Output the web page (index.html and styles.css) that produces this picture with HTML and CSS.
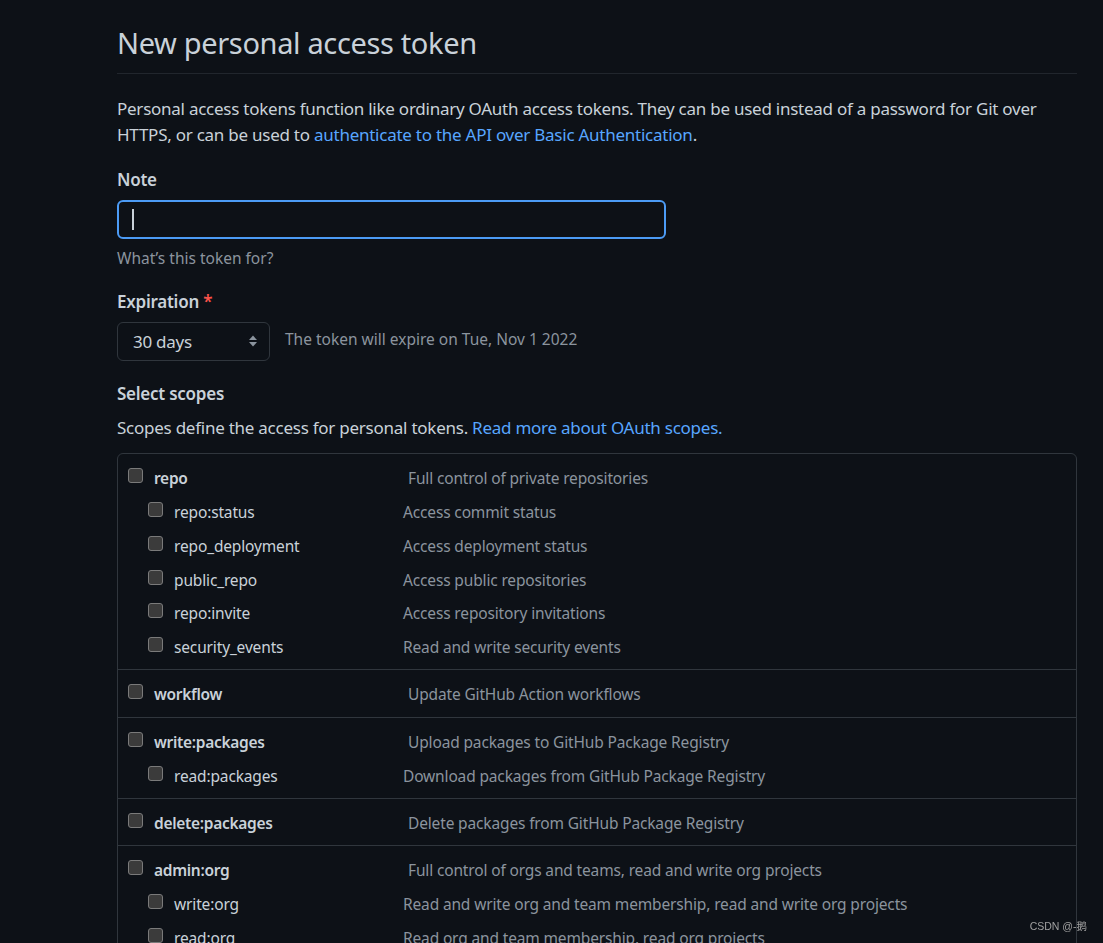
FILE: index.html
```html
<!DOCTYPE html>
<html lang="en">
<head>
<meta charset="utf-8">
<title>New personal access token</title>
<link rel="stylesheet" href="styles.css">
</head>
<body>
<main class="container">
  <div class="subhead">
    <h1 class="subhead-title">New personal access token</h1>
  </div>
  <p class="intro">Personal access tokens function like ordinary OAuth access tokens. They can be used instead of a password for Git over HTTPS, or can be used to <a href="#">authenticate to the API over Basic Authentication</a>.</p>

  <div class="field">
    <div class="label">Note</div>
    <div class="input"><span class="caret"></span></div>
    <div class="hint">What’s this token for?</div>
  </div>

  <div class="field">
    <div class="label">Expiration <span class="req">*</span></div>
    <div class="expire-row">
      <div class="select">
        <span>30 days</span>
        <svg class="select-arrows" width="10" height="14" viewBox="0 0 10 14"><path d="M5 1.5 L9 6 H1 Z" fill="#8b949e"/><path d="M1 8 H9 L5 12.5 Z" fill="#8b949e"/></svg>
      </div>
      <span class="expire-note">The token will expire on Tue, Nov 1 2022</span>
    </div>
  </div>

  <div class="label scopes-label">Select scopes</div>
  <p class="scopes-desc">Scopes define the access for personal tokens. <a href="#">Read more about OAuth scopes.</a></p>

  <div class="scopes">
    <div class="group">
      <div class="row top"><span class="cb"></span><span class="name">repo</span><span class="desc">Full control of private repositories</span></div>
      <div class="row child"><span class="cb"></span><span class="name">repo:status</span><span class="desc">Access commit status</span></div>
      <div class="row child"><span class="cb"></span><span class="name">repo_deployment</span><span class="desc">Access deployment status</span></div>
      <div class="row child"><span class="cb"></span><span class="name">public_repo</span><span class="desc">Access public repositories</span></div>
      <div class="row child"><span class="cb"></span><span class="name">repo:invite</span><span class="desc">Access repository invitations</span></div>
      <div class="row child"><span class="cb"></span><span class="name">security_events</span><span class="desc">Read and write security events</span></div>
    </div>
    <div class="group">
      <div class="row top"><span class="cb"></span><span class="name">workflow</span><span class="desc">Update GitHub Action workflows</span></div>
    </div>
    <div class="group">
      <div class="row top"><span class="cb"></span><span class="name">write:packages</span><span class="desc">Upload packages to GitHub Package Registry</span></div>
      <div class="row child"><span class="cb"></span><span class="name">read:packages</span><span class="desc">Download packages from GitHub Package Registry</span></div>
    </div>
    <div class="group">
      <div class="row top"><span class="cb"></span><span class="name">delete:packages</span><span class="desc">Delete packages from GitHub Package Registry</span></div>
    </div>
    <div class="group">
      <div class="row top"><span class="cb"></span><span class="name">admin:org</span><span class="desc">Full control of orgs and teams, read and write org projects</span></div>
      <div class="row child"><span class="cb"></span><span class="name">write:org</span><span class="desc">Read and write org and team membership, read and write org projects</span></div>
      <div class="row child"><span class="cb"></span><span class="name">read:org</span><span class="desc">Read org and team membership, read org projects</span></div>
    </div>
  </div>
</main>
<div class="watermark">CSDN @-鹅</div>
</body>
</html>
```
FILE: styles.css
```css
html, body {
  margin: 0;
  padding: 0;
  background: #0d1117;
  height: 100%;
  overflow: hidden;
}
body {
  color: #c9d1d9;
  font-family: "Noto Sans", "Open Sans", "Noto Sans CJK SC", sans-serif;
  font-size: 17px;
  letter-spacing: -0.25px;
  line-height: 26.25px;
}
a { color: #58a6ff; text-decoration: none; }

.container {
  margin-left: 117px;
  width: 960px;
  padding-top: 24px;
}
.subhead {
  border-bottom: 1px solid #21262d;
  padding-bottom: 11px;
}
.subhead-title {
  margin: 0;
  font-size: 29px;
  letter-spacing: -0.35px;
  line-height: 37.5px;
  font-weight: 400;
}
.intro {
  margin: 22px 0 0;
}
.field { margin-top: 19px; }
.label {
  font-weight: 600;
}
.req { color: #f85149; }
.input {
  margin-top: 7px;
  width: 532px;
  height: 35px;
  border: 2px solid #4c9bf5;
  border-radius: 6px;
  display: flex;
  align-items: center;
  padding-left: 13px;
}
.caret {
  width: 2px;
  height: 21px;
  background: #c9d1d9;
}
.hint {
  margin-top: 8px;
  font-size: 15.5px;
  letter-spacing: 0;
  line-height: 22px;
  color: #8b949e;
}
.field + .field { margin-top: 20px; }
.expire-row {
  margin-top: 6px;
  display: flex;
  align-items: center;
  gap: 15px;
}
.select {
  height: 37px;
  border: 1px solid #30363d;
  border-radius: 6px;
  display: flex;
  align-items: center;
  justify-content: space-between;
  padding: 0 11px 0 15px;
  box-sizing: content-box;
  width: 125px;
}
.select span { padding-top: 2px; }
.expire-note {
  color: #8b949e;
  font-size: 15.5px;
  letter-spacing: 0;
  margin-top: -3px;
}
.scopes-label { margin-top: 20px; }
.scopes-desc { margin: 8px 0 0; }

.scopes {
  margin-top: 12px;
  border: 1px solid #30363d;
  border-radius: 6px;
  font-size: 15.5px;
  letter-spacing: -0.15px;
}
.group {
  padding: 11px 10px 9px;
}
.group + .group {
  border-top: 1px solid #30363d;
  padding-top: 11px;
}
.row {
  display: flex;
  align-items: flex-start;
}
.row.child {
  margin-top: 7.6px;
  padding-left: 20px;
}
.cb {
  flex: none;
  box-sizing: border-box;
  width: 15px;
  height: 15px;
  border: 1px solid #7a7a7a;
  background: #3b3b3b;
  border-radius: 3px;
  margin-top: 3px;
  margin-right: 11px;
}
.row.top .name {
  width: 254px;
  font-weight: 600;
  letter-spacing: -0.3px;
}
.row.child .name {
  width: 229px;
}
.name { flex: none; }
.desc { color: #8b949e; }

.watermark {
  position: fixed;
  right: 16px;
  bottom: 10px;
  font-family: "Liberation Sans", "Noto Sans CJK SC", sans-serif;
  font-size: 10.5px;
  letter-spacing: 0;
  line-height: 14px;
  color: #a0a0a0;
}
```
